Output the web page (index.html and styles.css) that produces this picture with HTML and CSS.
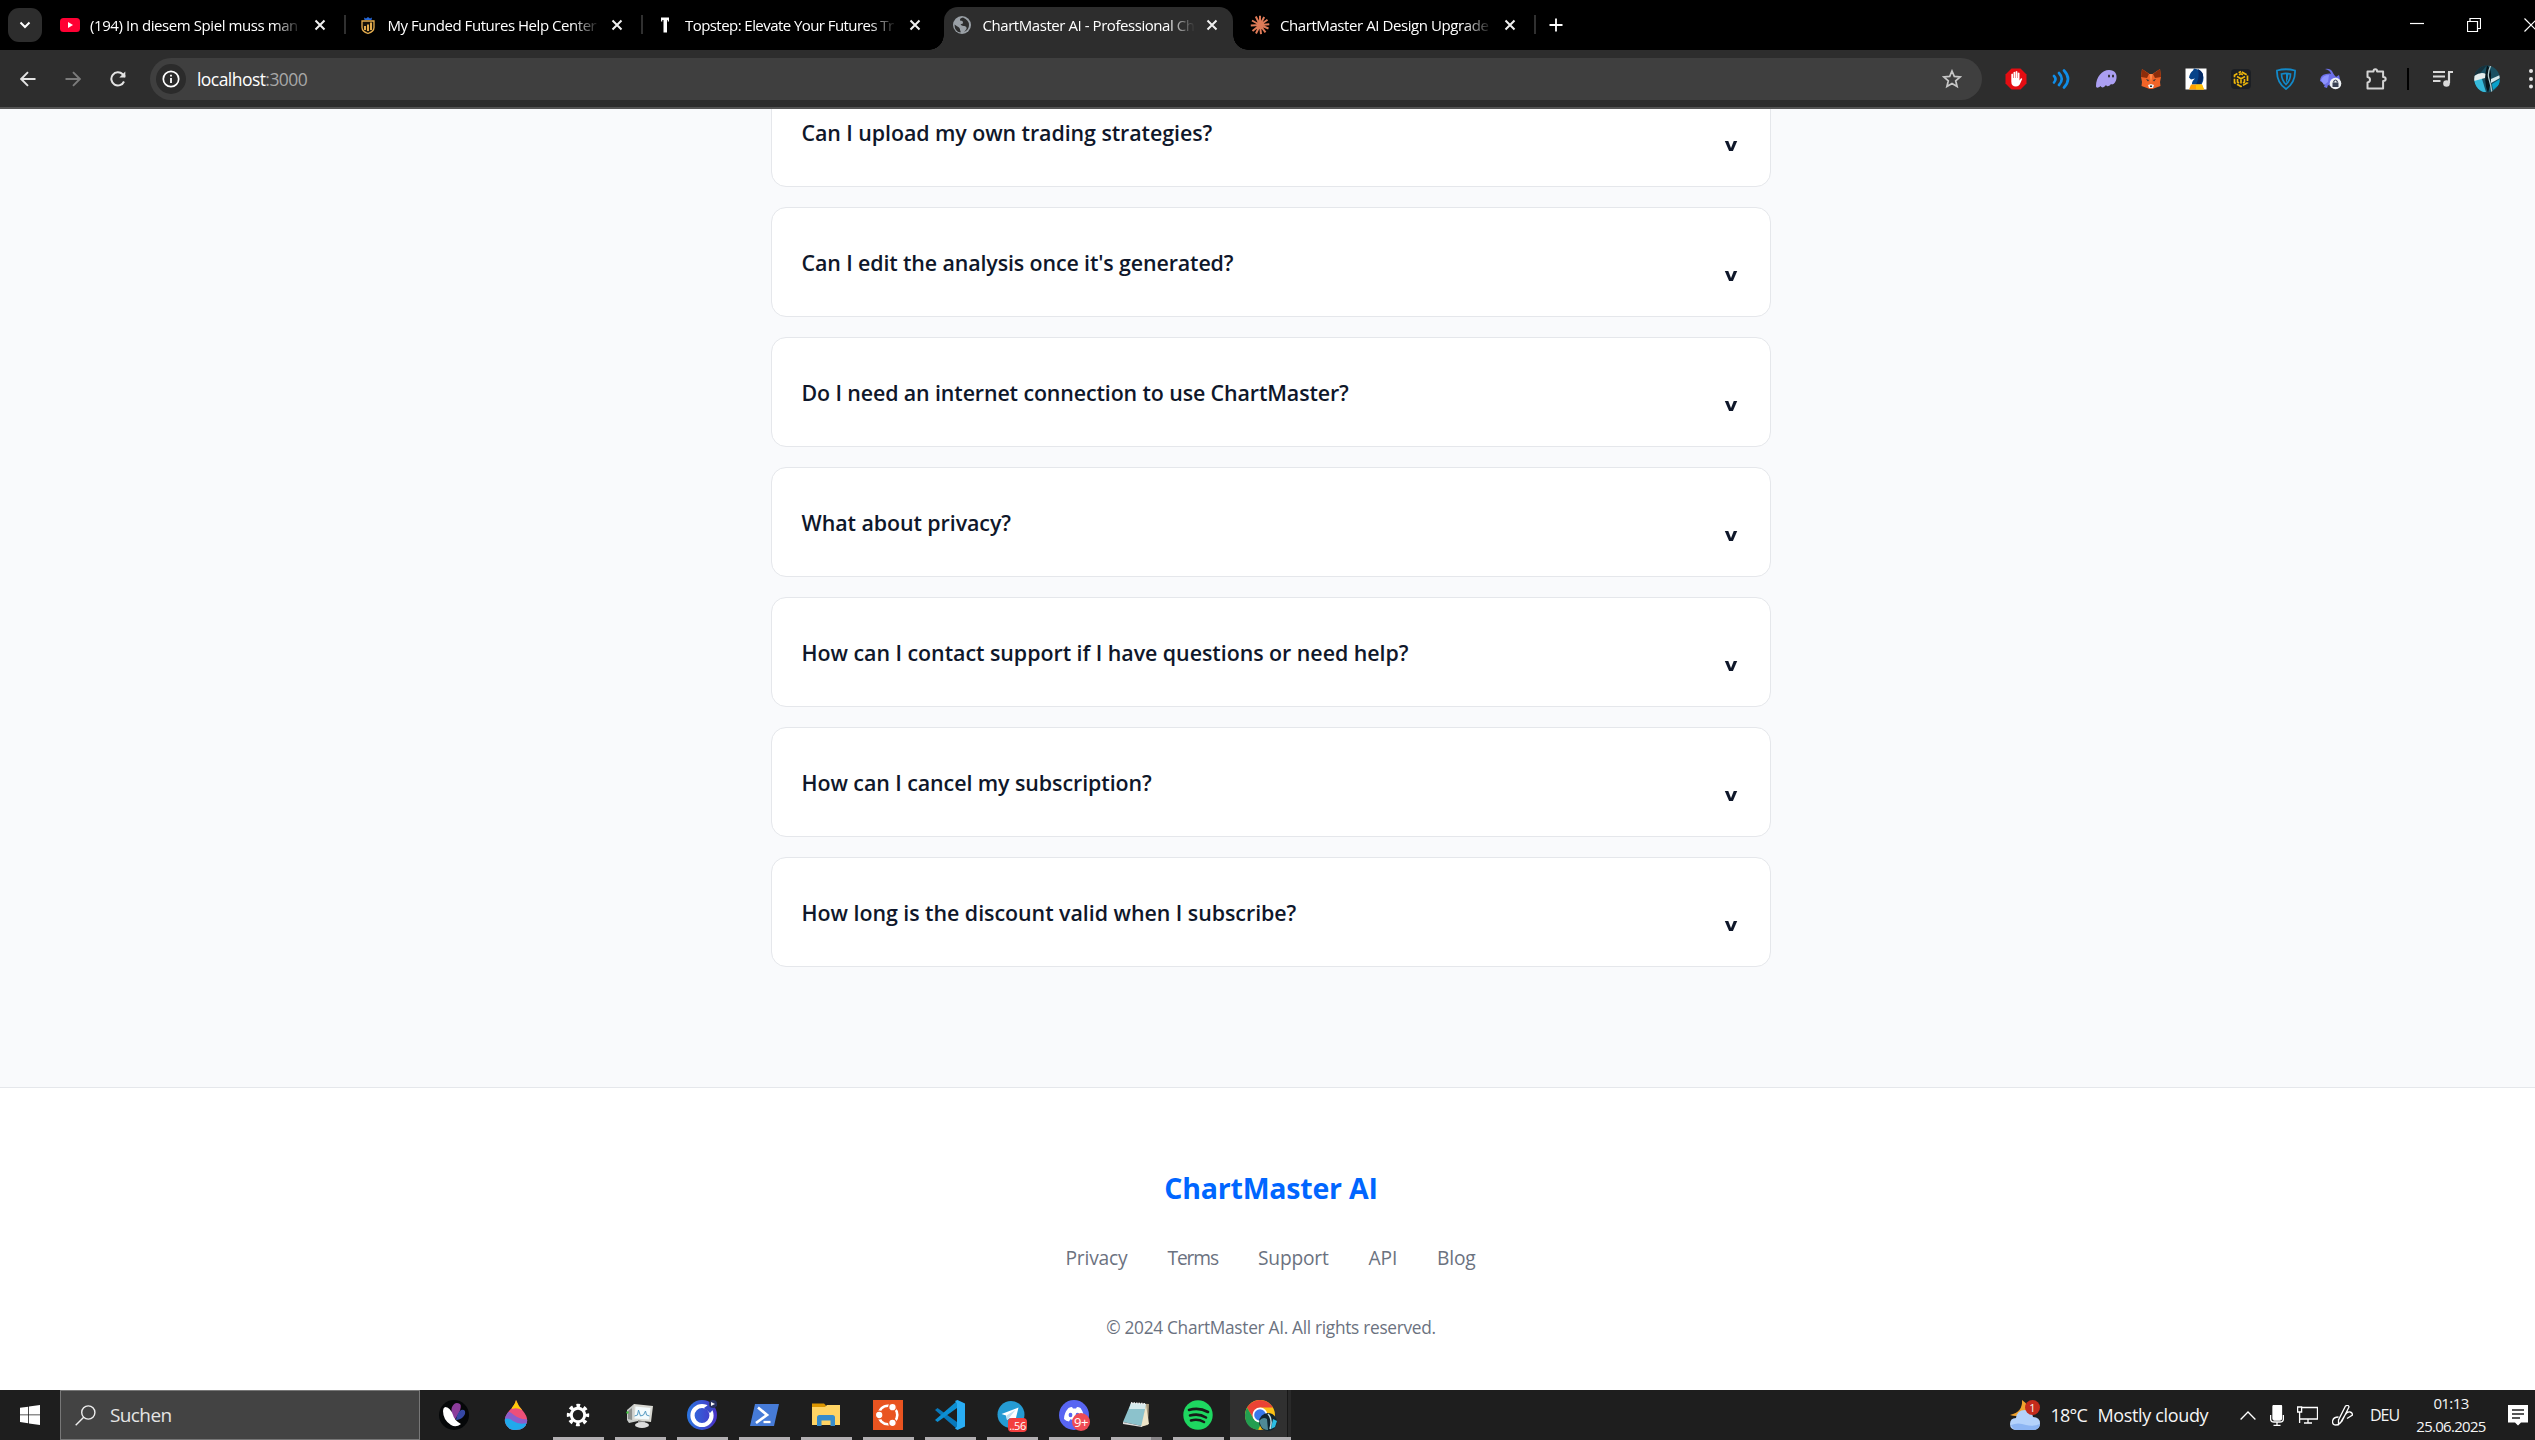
FILE: index.html
```html
<!DOCTYPE html>
<html lang="en">
<head>
<meta charset="utf-8">
<title>ChartMaster AI - Professional Chart Analysis</title>
<link rel="stylesheet" href="styles.css">
</head>
<body>
<div class="screen">
  <header class="tabs">
    <button class="tab-search"><svg width="12" height="8" viewBox="0 0 12 8"><path d="M1.5 1.5 6 6l4.5-4.5" fill="none" stroke="#fff" stroke-width="2"/></svg></button>
    <div class="tab first">
      <svg class="fav" width="20" height="20" viewBox="0 0 20 20"><rect y="3" width="20" height="14" rx="3.5" fill="#ff0033"/><path d="M8 7v6l5-3z" fill="#fff"/></svg>
      <span class="tab-title t1">(194) In diesem Spiel muss man</span>
      <svg class="close" viewBox="0 0 12 12"><path d="M1.5 1.5l9 9m0-9l-9 9"/></svg>
    </div>
    <div class="tab">
      <svg class="fav" width="20" height="20" viewBox="0 0 20 20"><path d="M6 2.500l2 1 2-1.500 2 1.500 2-1-.5 2.500h-7z" fill="#2768d8"/><path d="M4 6h12v6.500q0 4-6 6-6-2-6-6z" fill="#17130b" stroke="#e5ad4e" stroke-width="1.300"/><path d="M6 11h2v4H6zm3-1.500h2V16H9zm3-2h2V15h-2z" fill="#e5ad4e"/></svg>
      <span class="tab-title t2">My Funded Futures Help Center</span>
      <svg class="close" viewBox="0 0 12 12"><path d="M1.5 1.5l9 9m0-9l-9 9"/></svg>
    </div>
    <div class="tab nosep">
      <svg class="fav" width="20" height="20" viewBox="0 0 20 20"><path d="M6 2.500h8v4h-1.300V5H12v12.500H8.500V5h-1.200v1.500H6z" fill="#fff"/></svg>
      <span class="tab-title t3">Topstep: Elevate Your Futures Tr</span>
      <svg class="close" viewBox="0 0 12 12"><path d="M1.5 1.5l9 9m0-9l-9 9"/></svg>
    </div>
    <div class="tab active">
      <svg class="fav" width="20" height="20" viewBox="0 0 20 20"><circle cx="9" cy="10" r="9" fill="#9aa0a6"/><path d="M10 2.500Q6.500 3 7 5.500q3 0 3 2T7.500 9q1 2.500 4 2 2.500.500 2 3-1 1.500-2.500 3 5-2 5-7T10 2.500zM1.500 9.500l4.500 3q1.500 1.500 1 2.500 1 1 .500 2.500-6-1-6-8z" fill="#2d2d2d"/></svg>
      <span class="tab-title t4">ChartMaster AI - Professional Ch</span>
      <svg class="close" viewBox="0 0 12 12"><path d="M1.5 1.5l9 9m0-9l-9 9"/></svg>
    </div>
    <div class="tab">
      <svg class="fav" width="20" height="20" viewBox="0 0 20 20"><path d="M10 10V.8M10 10l4.200-8M10 10l7.500-5.200M10 10l9.300-.8M10 10l8.500 3.500M10 10l5.500 7.300M10 10l1 9.200M10 10l-4 8.500M10 10l-7.500 6M10 10L.8 10.500M10 10L2 5.500M10 10L5.800 1.500" stroke="#e07b58" stroke-width="2"/></svg>
      <span class="tab-title t5">ChartMaster AI Design Upgrade</span>
      <svg class="close" viewBox="0 0 12 12"><path d="M1.5 1.5l9 9m0-9l-9 9"/></svg>
    </div>
    <svg class="plus" width="14" height="14" viewBox="0 0 14 14"><path d="M7 .5v13M.5 7h13" stroke="#fff" stroke-width="1.800"/></svg>
    <div class="window-buttons">
      <svg viewBox="0 0 14 14"><path d="M0 5.500h14"/></svg>
      <svg viewBox="0 0 14 14"><path d="M.5 3.500h10v10H.5zM3 3.500V.5h10.500v10h-3"/></svg>
      <svg viewBox="0 0 14 14"><path d="M.5.5l13 13m0-13l-13 13"/></svg>
    </div>
  </header>

  <nav class="toolbar">
    <div class="nav-buttons">
      <svg width="16" height="16" viewBox="0 0 16 16"><path d="M15.500 8H1.500M8 1.200L1.200 8 8 14.800" fill="none" stroke="#e3e3e3" stroke-width="1.900"/></svg>
      <svg width="16" height="16" viewBox="0 0 16 16"><path d="M.5 8h14M8 1.200L14.800 8 8 14.800" fill="none" stroke="#7b7b7b" stroke-width="1.900"/></svg>
      <svg width="16" height="16" viewBox="0 0 16 16"><path d="M14 10.500A6.600 6.600 0 1 1 12.700 3.300L15 5.700" fill="none" stroke="#e3e3e3" stroke-width="2"/><path d="M15.300.5v6H9.300z" fill="#e3e3e3"/></svg>
    </div>
    <div class="address">
      <span class="info"><svg width="18" height="18" viewBox="0 0 18 18"><circle cx="9" cy="9" r="7.700" fill="none" stroke="#fff" stroke-width="1.700"/><path d="M9 8v5M9 4.800v1.800" stroke="#fff" stroke-width="1.800"/></svg></span>
      <span class="url">localhost<span class="port">:3000</span></span>
      <svg class="star" width="20" height="20" viewBox="0 0 20 20"><path d="M10 2l2.300 5.400 5.900.500-4.500 3.900 1.400 5.700-5.100-3-5.100 3 1.400-5.700L1.800 7.900l5.900-.5z" fill="none" stroke="#c7c7c7" stroke-width="1.700"/></svg>
    </div>
    <div class="extensions">
      <svg viewBox="0 0 22 22"><path d="M6.500.5h9l6 6v9l-6 6h-9l-6-6v-9z" fill="#e40d12"/><path d="M6.300 11V6.200q1-1.200 1.700 0V10h.5V4.300q1-1.200 1.700 0V10h.4V3.500q1-1.200 1.800 0V10h.4V5q1-1.200 1.700 0v7.500l1.300-2q1.300-.6 1.400.6l-2.500 5.400q-1.200 2-3.700 2-4.700 0-4.700-5z" fill="#fff"/></svg>
      <svg viewBox="0 0 22 22"><path d="M4 8q3 3 0 6.500M9 5q5.500 6 0 12M14 2.500q8 8.500 0 17" fill="none" stroke="#108de8" stroke-width="2.600" stroke-linecap="round"/></svg>
      <svg viewBox="0 0 22 22"><path d="M1 18C1 9 7 2 14 2c6 0 8 4 7.500 8-.5 5-4 7.500-5.500 6-2 2.500-4 3-5 1-2 3-4.500 3-5.500 1-2 2-4.500 2.500-4.500 0z" fill="#ab9ff2"/><ellipse cx="14" cy="8" rx="1" ry="1.600" fill="#2d2d2d"/><ellipse cx="18" cy="8" rx="1" ry="1.600" fill="#2d2d2d"/></svg>
      <svg viewBox="0 0 22 22"><path d="M2 1l7.500 5h3L20 1l1 8-1 5 .500 4-5.500 2-2.500 1h-3L7 20l-5.500-2 .5-4-1-5z" fill="#f06428"/><path d="M2 1l7 5-2 4-6-1zM20 1l-7 5 2 4 6-1z" fill="#8c2d0b"/><path d="M8 17l3-1 3 1-1 3H9z" fill="#eee"/><path d="M6 11l3 1-1 1.500zM16 11l-3 1 1 1.500zM10 17.500h2V19h-2z" fill="#263238"/><path d="M9.500 6h3L11 15z" fill="#ff8a4b"/></svg>
      <svg viewBox="0 0 22 22"><path d="M.5.5h21v21H.5z" fill="#fff"/><path d="M9 .5q9 1 9.500 9 .2 4-2 7H7q-.5-3 3-6l-4 1-2-2q1-5 4-7z" fill="#064389"/><path d="M13 1q6 3 5 9-1 4-3 6.500h-4q4-7 2-15.500z" fill="#052b66"/><path d="M6 16.500h11l2 5H4z" fill="#ffa000"/><path d="M11 16.500h6l2 5h-8z" fill="#ffc107"/></svg>
      <svg viewBox="0 0 22 22"><rect x="1" y="1" width="20" height="20" rx="4" fill="#1c1f24"/><path d="M11 3.500l6.500 3.700v7.600L11 18.500l-6.500-3.700V7.200z" fill="none" stroke="#edb60b" stroke-width="1.700" stroke-dasharray="5.500 1.400" stroke-dashoffset="-1"/><path d="M7 8.500l4 2.300 4-2.300M11 10.800v4.700M7.500 11v3l1.500 1M14.500 11v3l-1.500 1M9 6.800l2-1 2 1" fill="none" stroke="#edb60b" stroke-width="1.600"/></svg>
      <svg viewBox="0 0 22 22"><path d="M2 2.500q9-2.500 18 0 .5 12-9 18.500-9.500-6.500-9-18.500z" fill="none" stroke="#1289c9" stroke-width="1.800"/><path d="M6.500 6q4.500-1.200 9 0 0 6-4.500 10.500Q6.500 12 6.500 6z" fill="none" stroke="#1289c9" stroke-width="1.700"/><path d="M11 5.500q2 0 2.500.3 0 5-2.500 9.200z" fill="#1289c9"/></svg>
      <svg viewBox="0 0 22 22"><path d="M5 1q6-1 8 4 1 2 3 4l3-2q2 6-1 9l-5 3-5-2-1 3-3-1 1-3-5-3q0-6 6-7 4-1 5 0-1-4-6-5z" fill="#6d70e8"/><path d="M1 12q2-5 8-5l-1 7-4 3z" fill="#8d93ff"/><circle cx="15.500" cy="15.500" r="5.800" fill="#eef1f4"/><path d="M12.500 14.500h6v4.500h-6z" fill="#3a4254"/><path d="M13.800 14.500v-1.200q1.700-2.600 3.400 0v1.200" fill="none" stroke="#3a4254" stroke-width="1.200"/></svg>
      <svg viewBox="0 0 22 22"><path d="M2.500 3.500h6q0-2.300 1.800-2.300t1.800 2.300h6V9q2.600 0 2.600 2t-2.600 2v7.500H2.500v-6q2.500-.5 2.500-2.800T2.500 9z" fill="none" stroke="#d4d4d4" stroke-width="2" stroke-linejoin="round"/></svg>
    </div>
    <span class="divider"></span>
    <svg class="media" width="20" height="18" viewBox="0 0 20 18"><path d="M0 2h12M0 6.500h12M0 11h7.500" stroke="#d9d9d9" stroke-width="1.900"/><path d="M16 2v11M15 2h5" stroke="#d9d9d9" stroke-width="2.200"/><circle cx="13.500" cy="13.500" r="3.300" fill="#d9d9d9"/></svg>
    <svg class="avatar" width="26" height="28" viewBox="0 0 26 28"><defs><clipPath id="av"><ellipse cx="13" cy="14" rx="12.800" ry="13.500"/></clipPath></defs><g clip-path="url(#av)"><path d="M0 0h26v28H0z" fill="#1a5062"/><path d="M0 0h13L4 11H0z" fill="#16323d"/><path d="M0 16q4-4 8-2l4 13H4z" fill="#36b9d9"/><path d="M0 11q7-5 12-2l-1 4-11 3z" fill="#e3ecec"/><path d="M13 0q5 5 4 13-1 9-3 15-5-12-1-28z" fill="#07151b"/><path d="M17 0q-4 8-2 14t3 14" fill="none" stroke="#aec7ca" stroke-width="1.300"/><path d="M17 14l9-4v3l-9 5z" fill="#d5e7ea"/><path d="M18 19l8-5v5l-7 6z" fill="#0aa1ca"/></g></svg>
    <svg class="dots" width="6" height="22" viewBox="0 0 6 22"><circle cx="3" cy="3" r="2" fill="#e3e3e3"/><circle cx="3" cy="11" r="2" fill="#e3e3e3"/><circle cx="3" cy="18.500" r="2" fill="#e3e3e3"/></svg>
  </nav>

  <div class="viewport">
    <main class="faq">
      <article class="item"><h3 class="q1">Can I upload my own trading strategies?</h3><span class="toggle">v</span></article>
      <article class="item"><h3 class="q2">Can I edit the analysis once it's generated?</h3><span class="toggle">v</span></article>
      <article class="item"><h3 class="q2">Do I need an internet connection to use ChartMaster?</h3><span class="toggle">v</span></article>
      <article class="item"><h3 class="q1">What about privacy?</h3><span class="toggle">v</span></article>
      <article class="item"><h3 class="q3">How can I contact support if I have questions or need help?</h3><span class="toggle">v</span></article>
      <article class="item"><h3 class="q1">How can I cancel my subscription?</h3><span class="toggle">v</span></article>
      <article class="item"><h3 class="q3">How long is the discount valid when I subscribe?</h3><span class="toggle">v</span></article>
    </main>
    <footer class="footer">
      <div class="brand">ChartMaster AI</div>
      <div class="links"><a>Privacy</a><a class="tight">Terms</a><a>Support</a><a>API</a><a>Blog</a></div>
      <p class="copyright">© 2024 ChartMaster AI. All rights reserved.</p>
    </footer>
  </div>

  <div class="taskbar">
    <div class="start"><svg width="20" height="20" viewBox="0 0 20 20"><path d="M0 2.800L8.200 1.700v7.800H0zM9 1.500L20 0v9.500H9zM0 10.300h8.200v7.900L0 17zM9 10.300h11V20L9 18.400z" fill="#fff"/></svg></div>
    <div class="search"><svg width="21" height="21" viewBox="0 0 21 21"><circle cx="13.300" cy="7.500" r="6.600" fill="none" stroke="#eee" stroke-width="1.400"/><path d="M8.700 12.300L.7 20.300" stroke="#eee" stroke-width="1.400"/></svg><span>Suchen</span></div>
    <div class="apps">
      <span class="app"><svg viewBox="0 0 30 30"><circle cx="15" cy="15" r="15" fill="#050708"/><path d="M15 21Q11 11 13 7q3-6 8-3 2 2-1 9z" fill="#8b3c9b"/><path d="M17 20q1-7 5-10 5-1 4 4-2 5-8 6z" fill="#3548a5"/><path d="M6 7q5 0 8 8 1 5 8 9-5 4-10 1Q4 20 4 11q0-3 2-4z" fill="#fff"/></svg></span>
      <span class="app"><svg viewBox="0 0 30 30"><defs><clipPath id="dr"><path d="M15 0q2 6 7 11 5 6 4 11-2 8-11 8T4 22q-1-5 4-11 6-6 7-11z"/></clipPath></defs><g clip-path="url(#dr)"><path d="M0 0h30v30H0z" fill="#ed4f79"/><path d="M9 0h12v10q-5-3-10-1z" fill="#fdca08"/><path d="M0 13q7-4 13 2 6 5 14 4v6q-10 2-16-4-5-3-9 0z" fill="#8b5dca"/><path d="M0 21q7-5 12 0 6 4 14 2v7H0z" fill="#20a9ec"/></g></svg></span>
      <span class="app open"><svg viewBox="0 0 30 30"><circle cx="15" cy="15" r="6.700" fill="none" stroke="#fff" stroke-width="3"/><circle cx="15" cy="15" r="9.300" fill="none" stroke="#fff" stroke-width="3.800" stroke-dasharray="3.650 3.650" stroke-dashoffset="1.800"/></svg></span>
      <span class="app open"><svg viewBox="0 0 30 30"><path d="M2 10l7-6 4 3v14l-9 2-2-3z" fill="#c9ccca"/><path d="M3 11v8l4 1V8z" fill="#8d908d"/><path d="M9 4l19 2-2 16-18-2z" fill="#d8d8d2"/><path d="M10.500 6.500l15 1.500-1.500 11.500-14.500-1z" fill="#f3fbfd"/><path d="M9.500 16l3-1 1-5 2 6 3-1 2-4 1 4 3 1" fill="none" stroke="#559ac2" stroke-width="1"/><path d="M13 21h7v3h-7z" fill="#888"/><ellipse cx="17" cy="25" rx="7" ry="3" fill="#ddd"/><circle cx="2.500" cy="12.500" r="1.200" fill="#43cb40"/></svg></span>
      <span class="app open"><svg viewBox="0 0 30 30"><defs><linearGradient id="ring" x2="1"><stop stop-color="#2a75e0"/><stop offset="1" stop-color="#4a31c6"/></linearGradient></defs><circle cx="15" cy="15" r="15" fill="url(#ring)"/><circle cx="15" cy="15.500" r="9.500" fill="none" stroke="#fff" stroke-width="4.200"/><path d="M17 8l8-6 5 3-7 8z" fill="#3748c7"/><circle cx="26" cy="4" r="4" fill="#29315e"/><path d="M24 2l4 2-4 2z" fill="#fff"/></svg></span>
      <span class="app open"><svg viewBox="0 0 30 30"><path d="M6 4h24l-5 22H1z" fill="#467bd7"/><path d="M9 7.500l9 7.500-11 8" fill="none" stroke="#fff" stroke-width="2.700"/><path d="M14.500 22h7" stroke="#fff" stroke-width="2.300"/></svg></span>
      <span class="app open"><svg viewBox="0 0 30 30"><path d="M1 3.500h12l2 2v4H1z" fill="#dc9600"/><path d="M1 7h13l2-2h13v20H1z" fill="#ffd464"/><path d="M6 26v-8.500q0-2.500 2.500-2.500h13q2.500 0 2.500 2.500V26h-4.500v-5.500h-9V26z" fill="#368ccc"/></svg></span>
      <span class="app open"><svg viewBox="0 0 30 30"><path d="M0 0h30v30H0z" fill="#e95420"/><circle cx="15" cy="15" r="9.300" fill="none" stroke="#fff" stroke-width="2.600"/><g fill="#fff" stroke="#e95420" stroke-width="1.300"><circle cx="6.200" cy="15" r="3.800"/><circle cx="19.500" cy="7.200" r="3.800"/><circle cx="19.500" cy="22.800" r="3.800"/></g></svg></span>
      <span class="app open"><svg viewBox="0 0 30 30"><path d="M0 10l2.500-2L22 22v7z" fill="#0878ba"/><path d="M0 20l2.500 2L22 8V1z" fill="#0c8fd3"/><path d="M20 1l2.500-1L30 3.500v23L22.500 30 20 28.500l2-2v-23z" fill="#29adf4"/></svg></span>
      <span class="app open"><svg viewBox="0 0 30 30"><circle cx="14" cy="14.500" r="13.500" fill="#259bd3"/><path d="M4.500 14L21.500 7.500 18 22l-5-4-3 2-1-4.500z" fill="#fff"/><path d="M9.500 15.500l9-5.500-6.500 8-2 2z" fill="#bfdff0"/></svg><b class="badge telegram">..56</b></span>
      <span class="app open"><svg viewBox="0 0 30 30"><circle cx="15" cy="15" r="15" fill="#5865f2"/><path d="M9.500 8q2-1 3.500-1l1 1.500h3L18 7q2 0 3.500 1 3.500 5 3.500 11-2 2-5 2.500l-1.300-2.200q-3.700 1-7.400 0L10 21.500Q7 21 5 19q0-6 4.500-11z" fill="#fff"/><ellipse cx="11.500" cy="15" rx="1.900" ry="2.200" fill="#5865f2"/><ellipse cx="18.500" cy="15" rx="1.900" ry="2.200" fill="#5865f2"/></svg><b class="badge discord">9+</b></span>
      <span class="app open notes"><svg viewBox="0 0 30 30"><path d="M10 3l18 1-1 21-5 1-4-2z" fill="#a89a7d"/><path d="M10 3l15 1-4 22L2 22z" fill="#8cc2cc"/><path d="M10 3l15 1-1 5L8 9z" fill="#d5eaec"/><path d="M25 5l3 19-8 3z" fill="#eee5c9"/><path d="M2 22l19 4v1L2 24z" fill="#ddd"/><path d="M10 3l15 1" stroke="#eee" stroke-width="1.800" stroke-dasharray="1.500 1"/></svg></span>
      <span class="app open"><svg viewBox="0 0 30 30"><circle cx="15" cy="15" r="14.700" fill="#1ed760"/><path d="M6 10q10-3 19 2M7 15.500q9-2.500 16 2M8 20.500q7-2 13 1.500" fill="none" stroke="#171b18" stroke-width="2.600" stroke-linecap="round"/></svg></span>
      <span class="app open current"><svg viewBox="0 0 30 30"><circle cx="15" cy="15" r="15" fill="#fbc116"/><path d="M2 7.500Q7 0 15 0t13 7.500H15L8.500 18.700z" fill="#ea4335"/><path d="M2 7.500L8.500 18.700Q12 23 17 22l-4 8Q0 28 0 15q0-4 2-7.500z" fill="#239e50"/><circle cx="15" cy="15" r="7.500" fill="#fff"/><circle cx="15" cy="15" r="5.800" fill="#3878ea"/><circle cx="23" cy="22" r="9" fill="#10252f"/><path d="M14 21q4-5 8-2l1 11q-5 0-7-4z" fill="#4f8995"/><path d="M23 14q5 5 2 15" fill="none" stroke="#bfdbe2" stroke-width="1.500"/><path d="M28 19l4 2-2 6-4 2z" fill="#2bbde3"/></svg></span>
    </div>
    <div class="weather">
      <svg width="30" height="30" viewBox="0 0 30 30"><path d="M12 0q8 5 3 12-6 6-15 3 13-3 12-15z" fill="#f0a22d"/><path d="M7 30q-7 0-7-6t6-6q1-8 9-8 7 0 8 7 7 0 7 6.500T23 30z" fill="#b4d2fb"/><path d="M1 25q2 5 6 5h16q6 0 7-6-7 3-14 1-8-3-15 0z" fill="#8db5f3"/><circle cx="22.500" cy="7.500" r="7.500" fill="#c42b1c"/></svg>
      <b class="alert">1</b><span class="temp">18°C</span><span class="cond">Mostly cloudy</span>
    </div>
    <div class="tray">
      <svg class="up" width="16" height="9" viewBox="0 0 16 9"><path d="M.6 8.500L8 1l7.400 7.500"/></svg>
      <svg class="mic" width="14" height="21" viewBox="0 0 14 21"><rect x="3" width="8.500" height="15" rx="1.500" fill="#fff"/><path d="M.6 10v4q0 3 3.400 3h6q3.400 0 3.400-3v-4M7 17v3M3.500 20.300h7"/></svg>
      <svg class="net" width="21" height="18" viewBox="0 0 21 18"><path d="M5 1.500h15.500v11.500H3M11 13v4M7 17h8M.6 1h4v5h-4zM2.600 6v11"/></svg>
      <svg class="pen" width="21" height="21" viewBox="0 0 21 21"><path d="M13.500 1q3-1.500 3.500 1L10 16l-3.500 3.500V15zM6.500 12q-5.500 0-6 4.500 0 3.500 3.500 3.500 4 0 6-5l3-5q2-3.500 5-3 2.500.5 2.500 3L15 13.500"/></svg>
      <span class="lang">DEU</span>
      <div class="clock"><span class="time">01:13</span><span class="date">25.06.2025</span></div>
      <svg class="note" width="20" height="21" viewBox="0 0 20 21"><path d="M0 0h20v17.500h-7L10 20.500l-3-3H0z" fill="#fff"/><path d="M4 5h12M4 9h12M4 13h8" stroke="#1f1f1f" stroke-width="1.300"/></svg>
    </div>
  </div>
</div>
</body>
</html>
```
FILE: styles.css
```css
* { box-sizing: border-box; }
body { margin: 0; overflow: hidden; font-family: "Open Sans", "Noto Sans", sans-serif; }
svg { display: block; flex: none; }
h3, p { margin: 0; }
.screen { display: flex; flex-direction: column; width: 2542px; height: 1440px; }

/* Tab strip */
.tabs { display: flex; align-items: center; flex: none; height: 50px; background: #000; }
.tab-search { display: grid; place-items: center; width: 34px; height: 34px; margin: 0 0 0 8px; padding: 0; border: 0; border-radius: 11px; background: #2d2d2d; }
.tab { position: relative; display: flex; align-items: center; flex: none; width: 297.5px; height: 50px; padding-left: 12px; }
.tab.first { margin-left: 6px; }
.tab::after { content: ""; position: absolute; right: 0; top: 15px; width: 2px; height: 19px; background: #303030; }
.tab.nosep::after { display: none; }
.tab-title { width: 216px; margin-left: 10px; white-space: nowrap; font-size: 15px; line-height: 22px; color: #fff; mask-image: linear-gradient(90deg, #000 184px, transparent 212px); }
.t1 { letter-spacing: -.42px; }
.t2 { letter-spacing: -.46px; }
.t3 { letter-spacing: -.56px; }
.t4 { letter-spacing: -.44px; }
.t5 { letter-spacing: -.42px; }
.close { width: 12px; height: 12px; margin-left: 7.5px; fill: none; stroke: #f0f0f0; stroke-width: 2; }
.tab.active { isolation: isolate; }
.tab.active::before { content: ""; position: absolute; z-index: -1; left: 3px; top: 7px; width: 289px; height: 43px; border-radius: 14px 14px 0 0; background: #2d2d2d; }
.tab.active::after { z-index: -1; left: -12px; right: auto; top: 35px; width: 319px; height: 15px; background: radial-gradient(circle at 0 0, transparent 14.5px, #2d2d2d 15px) 0 0 / 15px 15px no-repeat, radial-gradient(circle at 100% 0, transparent 14.5px, #2d2d2d 15px) 100% 0 / 15px 15px no-repeat; }
.plus { margin-left: 13px; }
.window-buttons { display: flex; gap: 43px; margin: 0 4px 0 auto; }
.window-buttons svg { width: 14px; height: 14px; fill: none; stroke: #fff; stroke-width: 1.2; }

/* Toolbar */
.toolbar { display: flex; align-items: center; flex: none; height: 59px; padding-left: 19px; border-bottom: 2px solid #555; background: #2d2d2d; }
.nav-buttons { display: flex; gap: 29px; width: 131px; padding-left: 1px; }
.address { display: flex; align-items: center; width: 1832px; height: 42px; padding: 0 20px 0 6px; border-radius: 21px; background: #3f3f3f; }
.info { display: grid; place-items: center; width: 30px; height: 30px; border-radius: 50%; background: #2b2b2b; }
.url { margin-left: 11px; font-size: 17.5px; letter-spacing: -.55px; color: #fff; }
.port { color: #a8a8a8; }
.star { margin-left: auto; }
.extensions { display: flex; gap: 23.1px; margin-left: 22.5px; }
.extensions svg { width: 22px; height: 22px; }
.divider { width: 2px; height: 22px; margin-left: 20px; background: #000; }
.media { margin-left: 24px; }
.avatar { margin-left: 21px; }
.dots { margin-left: 28px; }

/* FAQ */
.viewport { flex: none; height: 1281px; overflow: hidden; background: #f9fafc; }
.faq { display: flex; flex-direction: column; gap: 20px; width: 1000px; height: 978px; margin: 0 auto; }
.item { display: flex; align-items: center; justify-content: space-between; flex: none; height: 110px; padding: 2px 33px 0 29.5px; border: 1px solid #e5e7eb; border-radius: 15px; background: #fff; }
.item:first-child { margin-top: -32px; }
.item h3 { font-size: 21.4px; line-height: 32px; font-weight: 600; color: #0f172a; white-space: nowrap; }
.q1 { letter-spacing: -.07px; }
.q2 { letter-spacing: -.12px; }
.q3 { letter-spacing: -.04px; }
.toggle { padding-top: 23px; font: bold 18.5px/24px "DejaVu Sans", sans-serif; color: #0f172a; transform: scaleX(1.08); }

/* Footer */
.footer { display: flex; flex-direction: column; align-items: center; height: 303px; padding-top: 80px; border-top: 1px solid #e5e7eb; background: #fff; }
.brand { font-size: 28.5px; line-height: 40px; font-weight: 700; letter-spacing: -.2px; color: #0066ff; }
.links { display: flex; gap: 40px; margin-top: 36px; padding-right: 1px; font-size: 19.2px; line-height: 28px; letter-spacing: -.2px; color: #6b7280; }
.tight { letter-spacing: -1.1px; }
.copyright { margin-top: 43px; font-size: 17.3px; line-height: 26px; letter-spacing: -.3px; color: #6b7280; }

/* Taskbar */
.taskbar { display: flex; flex: none; height: 50px; background: #1e1e1e; color: #f5f5f5; }
.start { display: grid; place-items: center; width: 60px; }
.search { display: flex; align-items: center; gap: 14px; width: 360px; padding-left: 14px; border: 1px solid #777; background: #434343; font-size: 19px; letter-spacing: -.6px; color: #e5e5e5; }
.apps { display: flex; margin-left: 3px; }
.app { position: relative; display: grid; place-items: center; width: 62px; height: 50px; }
.app svg { width: 30px; height: 30px; overflow: visible; }
.app.open::after { content: ""; position: absolute; left: 6px; bottom: 0; width: 51px; height: 3px; background: #b2afb2; }
.app.current { width: 61px; margin-left: 1px; padding-right: 2px; background: linear-gradient(90deg, #303030 57px, #171717 57px, #171717 58px, #292929 58px); }
.app.current::after { left: 0; width: 61px; }
.app.notes::after { background: linear-gradient(90deg, #b2afb2 40px, #878487 40px); }
.badge { position: absolute; display: grid; place-items: center; color: #fff; font-weight: 400; letter-spacing: -.5px; }
.telegram { left: 27px; top: 28px; width: 19px; height: 14px; border-radius: 4px; background: #f33e3e; font-size: 11px; }
.discord { left: 29px; top: 23px; width: 18px; height: 18px; border-radius: 50%; background: #ef4b55; font-size: 13px; }
.weather { position: relative; display: flex; align-items: center; margin-left: 719px; font-size: 18px; }
.alert { position: absolute; left: 15px; top: 10px; width: 15px; font-size: 11px; line-height: 15px; font-weight: 400; text-align: center; }
.temp { width: 47px; margin-left: 10.5px; letter-spacing: -.8px; }
.cond { width: 111.5px; letter-spacing: -.35px; white-space: nowrap; }
.tray { display: flex; align-items: center; margin-left: 31px; }
.tray svg { fill: none; stroke: #fff; stroke-width: 1.3; }
.mic { margin-left: 14px; }
.net { margin-left: 13px; }
.pen { margin-left: 14px; }
.lang { width: 30px; margin-left: 17px; font-size: 16px; letter-spacing: -1px; }
.clock { display: flex; flex-direction: column; align-items: center; width: 72px; margin-left: 15px; font-size: 15px; line-height: 23px; }
.time { letter-spacing: -.6px; }
.date { letter-spacing: -.7px; }
.tray .note { margin-left: 21px; stroke: none; }
```
